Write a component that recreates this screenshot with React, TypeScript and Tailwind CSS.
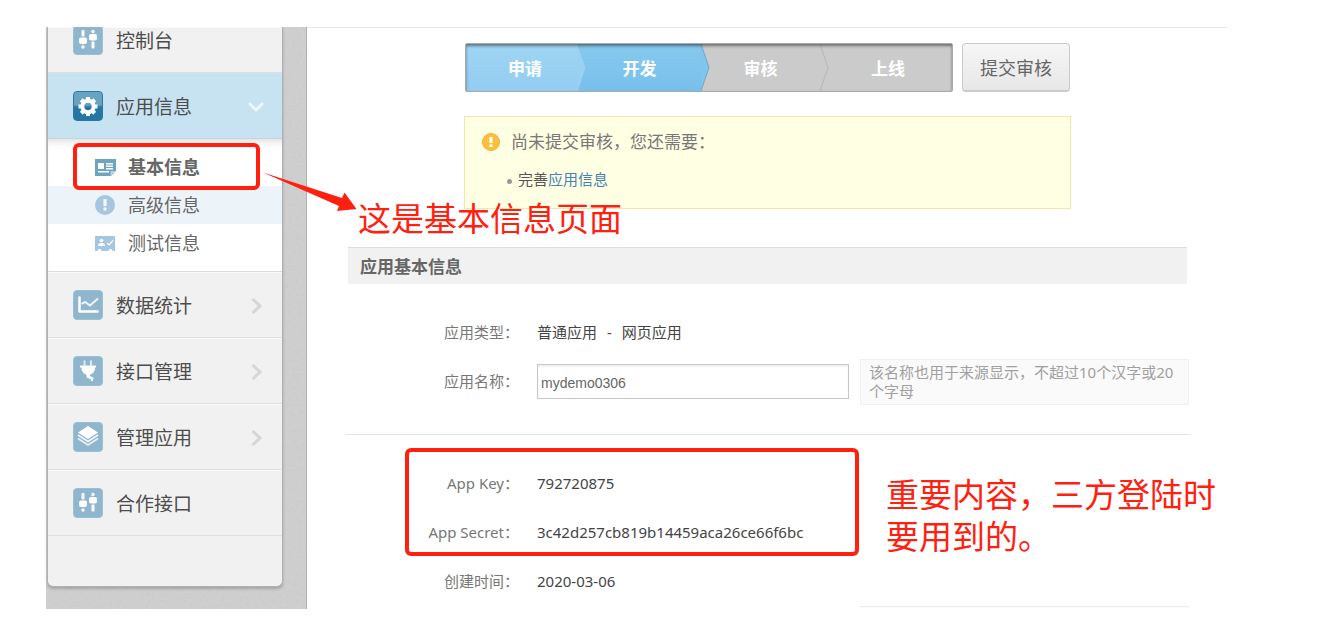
import type { ReactNode } from "react"
import { clsx } from "clsx"

interface IconTileProps {
    active?: boolean
    children: ReactNode
}

function IconTile({ active, children }: IconTileProps) {
    return (
        <span
            className={clsx(
                "block size-[30px] shrink-0 rounded-sm border",
                active
                    ? "border-[#2c78a3] bg-linear-to-b from-[#68a3c1] from-45% to-[#2676a3] to-55%"
                    : "border-[#98c0d6] bg-[#8fb6cd]"
            )}
        >
            <svg viewBox="1 1 28 28" className="size-full" aria-hidden="true">
                {children}
            </svg>
        </span>
    )
}

const slidersIcon = (
    <g fill="#fff">
        <rect x="8.500" y="5" width="3" height="6.500" rx="1" />
        <rect x="6" y="12.500" width="8" height="6.500" rx="2" />
        <circle cx="10" cy="22" r="1.700" />
        <circle cx="20" cy="6.500" r="1.700" />
        <rect x="16" y="9" width="8" height="6.500" rx="2" />
        <rect x="18.500" y="16.500" width="3" height="7" rx="1" />
    </g>
)

const gearIcon = (
    <g stroke="#fff" fill="none">
        <circle cx="15" cy="15.500" r="5.700" strokeWidth="4" />
        {[0, 45, 90, 135].map((a) => (
            <path
                key={a}
                d="M15 6V9M15 22v3"
                strokeWidth="4"
                transform={`rotate(${a} 15 15.5)`}
            />
        ))}
    </g>
)

const chartIcon = (
    <g fill="none" stroke="#fff">
        <path d="M6.500 7.500V21.500H24.500" strokeWidth="2.500" strokeLinecap="round" strokeLinejoin="round" />
        <path d="M8.500 14l3.500-2 5 3.500 8-7" strokeWidth="2" opacity="0.850" />
    </g>
)

const plugIcon = (
    <g fill="#fff">
        <rect x="10.500" y="4.500" width="2" height="5" opacity="0.700" />
        <rect x="17" y="4.500" width="2" height="5" opacity="0.700" />
        <path d="M7 9.500h16v2h-1c0 4-2 6.500-5 7v1.500l3.500 1.500-.5 3.500h-2l-.5-2-4-1.500v-3c-3-.5-5-3-5-7H7z" />
    </g>
)

const layersIcon = (
    <g fill="none" stroke="#fff" strokeWidth="1.600">
        <path d="M15 4L25 10.500 15 17 5 10.500z" fill="#fff" stroke="none" />
        <path d="M5 13l10 6.500L25 13" opacity="0.900" />
        <path d="M5 16.500L15 23l10-6.500" opacity="0.800" />
    </g>
)

const cardIcon = (
    <svg viewBox="0 0 21 17" className="h-[17px] w-[21px]" aria-hidden="true">
        <path d="M0 0h21v12l-5 5H0z" fill="#6fa3c0" />
        <path d="M3 4h6v6H3zM11 4h7v1.500h-7zM11 6.500h7V8h-7zM11 9h7v1.500h-7zM3 12h11v1.500H3z" fill="#fff" />
        <path d="M15.500 17v-5H21z" fill="#b9d3e2" />
    </svg>
)

const alertIcon = (
    <svg viewBox="0 0 20 20" className="size-5" aria-hidden="true">
        <circle cx="10" cy="10" r="10" fill="#a5c6e0" />
        <path d="M8.500 4h3v7h-3zM8.500 12.500h3v3h-3z" fill="#fff" />
    </svg>
)

const testIcon = (
    <svg viewBox="0 0 20 15" className="h-[15px] w-5" aria-hidden="true">
        <path d="M0 0h20v15h-2.500a2 2 0 0 0-4 0h-7a2 2 0 0 0-4 0H0z" fill="#a5c6e0" />
        <circle cx="6.500" cy="4.500" r="1.800" fill="#fff" />
        <path d="M3 10c0-2.500 2-3 3.500-3s3.500.5 3.500 3z" fill="#fff" />
        <path d="M12 7l2 2 4-4.500" fill="none" stroke="#fff" strokeWidth="1.200" />
    </svg>
)

interface NavItemProps {
    label: string
    icon: ReactNode
    active?: boolean
    expandable?: boolean
    className?: string
}

function NavItem({ label, icon, active, expandable, className = "h-[66px]" }: NavItemProps) {
    return (
        <a
            href="#"
            className={clsx(
                "flex items-center gap-[13px] border-b pr-[18px] pl-[25px] text-[19px] text-[#4c4c4c]",
                active ? "border-[#c4d5de] bg-[#c7e3f2]" : "border-[#dfdfdf] bg-[#f1f1f1] shadow-[inset_0_1px_0_#fafafa]",
                className
            )}
        >
            <IconTile active={active}>{icon}</IconTile>
            <span className="mt-[2px] flex-1 leading-6">{label}</span>
            {expandable && (
                <svg viewBox="0 0 16 16" className="mt-[2px] size-4" fill="none" aria-hidden="true">
                    {active ? (
                        <path d="M1 4l7 7 7-7" stroke="#f2f9fd" strokeWidth="2.500" />
                    ) : (
                        <path d="M4.500 1l7.500 7-7.500 7" stroke="#d6d6d6" strokeWidth="3" />
                    )}
                </svg>
            )}
        </a>
    )
}

interface SubItemProps {
    label: string
    icon: ReactNode
    className?: string
}

function SubItem({ label, icon, className }: SubItemProps) {
    return (
        <li>
            <a href="#" className={clsx("flex h-[38px] items-center pl-[47px] text-[18px] text-[#666]", className)}>
                <span className="w-[33px]">{icon}</span>
                {label}
            </a>
        </li>
    )
}

function Sidebar() {
    return (
        <aside className="relative w-[261px] shrink-0 border-r border-[#b0b0b0] bg-[#cfcfcf] pr-[23px] pb-[22px] pl-px">
            {/* Paper grain */}
            <svg className="absolute inset-0 size-full opacity-10" aria-hidden="true">
                <filter id="grain">
                    <feTurbulence type="fractalNoise" baseFrequency="0.3" numOctaves="2" />
                    <feColorMatrix type="saturate" values="0" />
                </filter>
                <rect width="100%" height="100%" filter="url(#grain)" />
            </svg>

            <nav className="relative overflow-hidden rounded-b-md border-x border-b border-[#b0b0b0] bg-[#f1f1f1] pb-[50px] shadow-[0_2px_3px_rgba(0,0,0,0.2)]">
                <NavItem label="控制台" icon={slidersIcon} className="h-[46px] pb-5" />
                <NavItem label="应用信息" icon={gearIcon} active expandable />
                <ul className="border-b border-[#dcdcdc] bg-white pt-[9px] pb-[9px] shadow-[inset_0_8px_8px_-6px_rgba(0,0,0,0.15)]">
                    <SubItem label="基本信息" icon={cardIcon} className="font-bold" />
                    <SubItem label="高级信息" icon={alertIcon} className="bg-[#edf4f9]" />
                    <SubItem label="测试信息" icon={testIcon} />
                </ul>
                <NavItem label="数据统计" icon={chartIcon} expandable />
                <NavItem label="接口管理" icon={plugIcon} expandable />
                <NavItem label="管理应用" icon={layersIcon} expandable />
                <NavItem label="合作接口" icon={slidersIcon} />
            </nav>
        </aside>
    )
}

interface StepProps {
    label: string
    className: string
    arrow?: string
    edge?: string
}

function Step({ label, className, arrow, edge }: StepProps) {
    return (
        <li className={clsx("relative flex items-center justify-center pt-[2px]", className)}>
            {label}
            {arrow && (
                <svg
                    viewBox="0 0 9 46"
                    preserveAspectRatio="none"
                    className="absolute top-0 -right-[9px] z-10 h-full w-[9px]"
                    aria-hidden="true"
                >
                    <path d="M0 0l8 23-8 23z" fill={arrow} />
                    <path d="M0 0l8 23-8 23" fill="none" stroke={edge} />
                </svg>
            )}
        </li>
    )
}

interface FieldProps {
    label: string
    htmlFor?: string
    children: ReactNode
}

function Field({ label, htmlFor, children }: FieldProps) {
    const labelClass = "w-[174px] shrink-0 text-right text-[#777]"
    return (
        <div className="flex h-[49px] items-center gap-[18px]">
            {htmlFor ? (
                <label htmlFor={htmlFor} className={labelClass}>{label}：</label>
            ) : (
                <span className={labelClass}>{label}：</span>
            )}
            {children}
        </div>
    )
}

function Main() {
    return (
        <main className="min-w-0 flex-1 border-t border-[#e9e9e9] px-[38px] pt-[15px] text-[15px] text-[#444]">
            <div className="ml-[119px] w-[607px]">
                <div className="flex h-[49px] gap-[9px] px-px">
                    <ol className="relative flex flex-1 overflow-hidden rounded-xs border border-[#aaa] bg-[#cbcbcb] text-[17px] font-bold text-white">
                        <Step
                            label="申请"
                            className="w-[112px] bg-linear-to-b from-[#9fd5f4] to-[#93cdf1] pl-[6px]"
                            arrow="#99d1f2"
                            edge="#86c2e8"
                        />
                        <Step
                            label="开发"
                            className="w-[123px] bg-linear-to-b from-[#87c9ee] to-[#77c0ec]"
                            arrow="#7fc5ed"
                            edge="#72a9ca"
                        />
                        <Step label="审核" className="w-[119px]" arrow="#cbcbcb" edge="#b7b7b7" />
                        <Step label="上线" className="flex-1 pl-1" />
                        <li
                            role="presentation"
                            className="pointer-events-none absolute inset-0 z-20 shadow-[inset_0_2px_3px_rgba(0,0,0,0.45)]"
                        />
                    </ol>
                    <button
                        type="button"
                        className="w-[108px] rounded-sm border border-b-2 border-[#cacaca] bg-linear-to-b from-[#f6f6f6] to-[#e7e7e7] pt-[3px] text-[18px] text-[#666]"
                    >
                        提交审核
                    </button>
                </div>

                <section className="mt-6 h-[93px] border border-[#eee8a9] bg-[#ffffe3] pt-[10px] pl-[17px]">
                    <div className="flex items-center gap-[11px] text-[17px] leading-[30px] text-[#777]">
                        <svg viewBox="0 0 18 18" className="size-[18px]" aria-hidden="true">
                            <circle cx="9" cy="9" r="8.500" fill="#fac03d" stroke="#efb139" />
                            <path d="M7.500 4h3v6h-3zM7.500 11.500h3V14h-3z" fill="#fff" />
                        </svg>
                        尚未提交审核，您还需要：
                    </div>
                    <ul className="mt-2 pl-[25px]">
                        <li className="flex items-center gap-[6px] leading-7 text-[#555]">
                            <span className="mt-[5px] size-[5px] rounded-full bg-[#999]" />
                            <span>
                                完善<a href="#" className="text-[#4284b8]">应用信息</a>
                            </span>
                        </li>
                    </ul>
                </section>
            </div>

            <h2 className="mx-[3px] mt-[38px] h-[37px] border-t border-[#dedede] bg-[#f1f1f1] pl-3 text-[17px] leading-[38px] font-bold text-[#666]">
                应用基本信息
            </h2>

            <form className="pt-6">
                <Field label="应用类型">
                    <span>普通应用<span className="mx-[10px]">-</span>网页应用</span>
                </Field>
                <Field label="应用名称" htmlFor="app-name">
                    <div className="flex flex-1 items-center gap-[11px]">
                        <input
                            id="app-name"
                            type="text"
                            defaultValue="mydemo0306"
                            className="h-[35px] w-[312px] border border-[#c6c6c6] px-[3px] pt-[3px] font-['Liberation_Sans',sans-serif] text-sm text-[#666] shadow-[inset_0_2px_2px_rgba(0,0,0,0.06)]"
                        />
                        <p className="w-[329px] border border-[#f0f0f0] bg-[#fafafa] px-2 py-[3px] leading-[19px] text-[#a0a0a0]">
                            该名称也用于来源显示，不超过10个汉字或20个字母
                        </p>
                    </div>
                </Field>
                <hr className="mt-7 mb-6 border-[#e4e4e4]" />
                <Field label="App Key">792720875</Field>
                <Field label="App Secret">3c42d257cb819b14459aca26ce66f6bc</Field>
                <Field label="创建时间">2020-03-06</Field>
                <div className="ml-[515px] h-[2px] w-[329px] border-t border-[#ececec] bg-[#fafafa]" />
            </form>
        </main>
    )
}

function Annotations() {
    return (
        <div className="pointer-events-none absolute inset-0 z-30 text-[33px] leading-[42px] text-[#ff2010]">
            <div className="absolute top-[116px] left-[27px] h-[47px] w-[187px] rounded-md border-4 border-[#ff2010]" />
            <svg viewBox="0 0 96 40" className="absolute top-[145px] left-[216px] h-10 w-24" aria-hidden="true">
                <path d="M1 0.500L80 26 82.500 20.500 94.500 37 75 39 77 34z" fill="#ff2010" />
            </svg>
            <p className="absolute top-[171px] left-[312px] whitespace-nowrap">这是基本信息页面</p>
            <div className="absolute top-[421px] left-[359px] h-[108px] w-[454px] rounded-md border-4 border-[#ff2010]" />
            <p className="absolute top-[447px] left-[840px] whitespace-nowrap">
                重要内容，三方登陆时
                <br />
                要用到的。
            </p>
        </div>
    )
}

export default function App() {
    return (
        <div
            lang="zh-CN"
            className="bg-white pt-[27px] pr-[91px] pb-3 pl-[46px] font-['Noto_Sans','Noto_Sans_CJK_SC',sans-serif]"
        >
            <div className="relative flex">
                <Sidebar />
                <Main />
                <Annotations />
            </div>
        </div>
    )
}
